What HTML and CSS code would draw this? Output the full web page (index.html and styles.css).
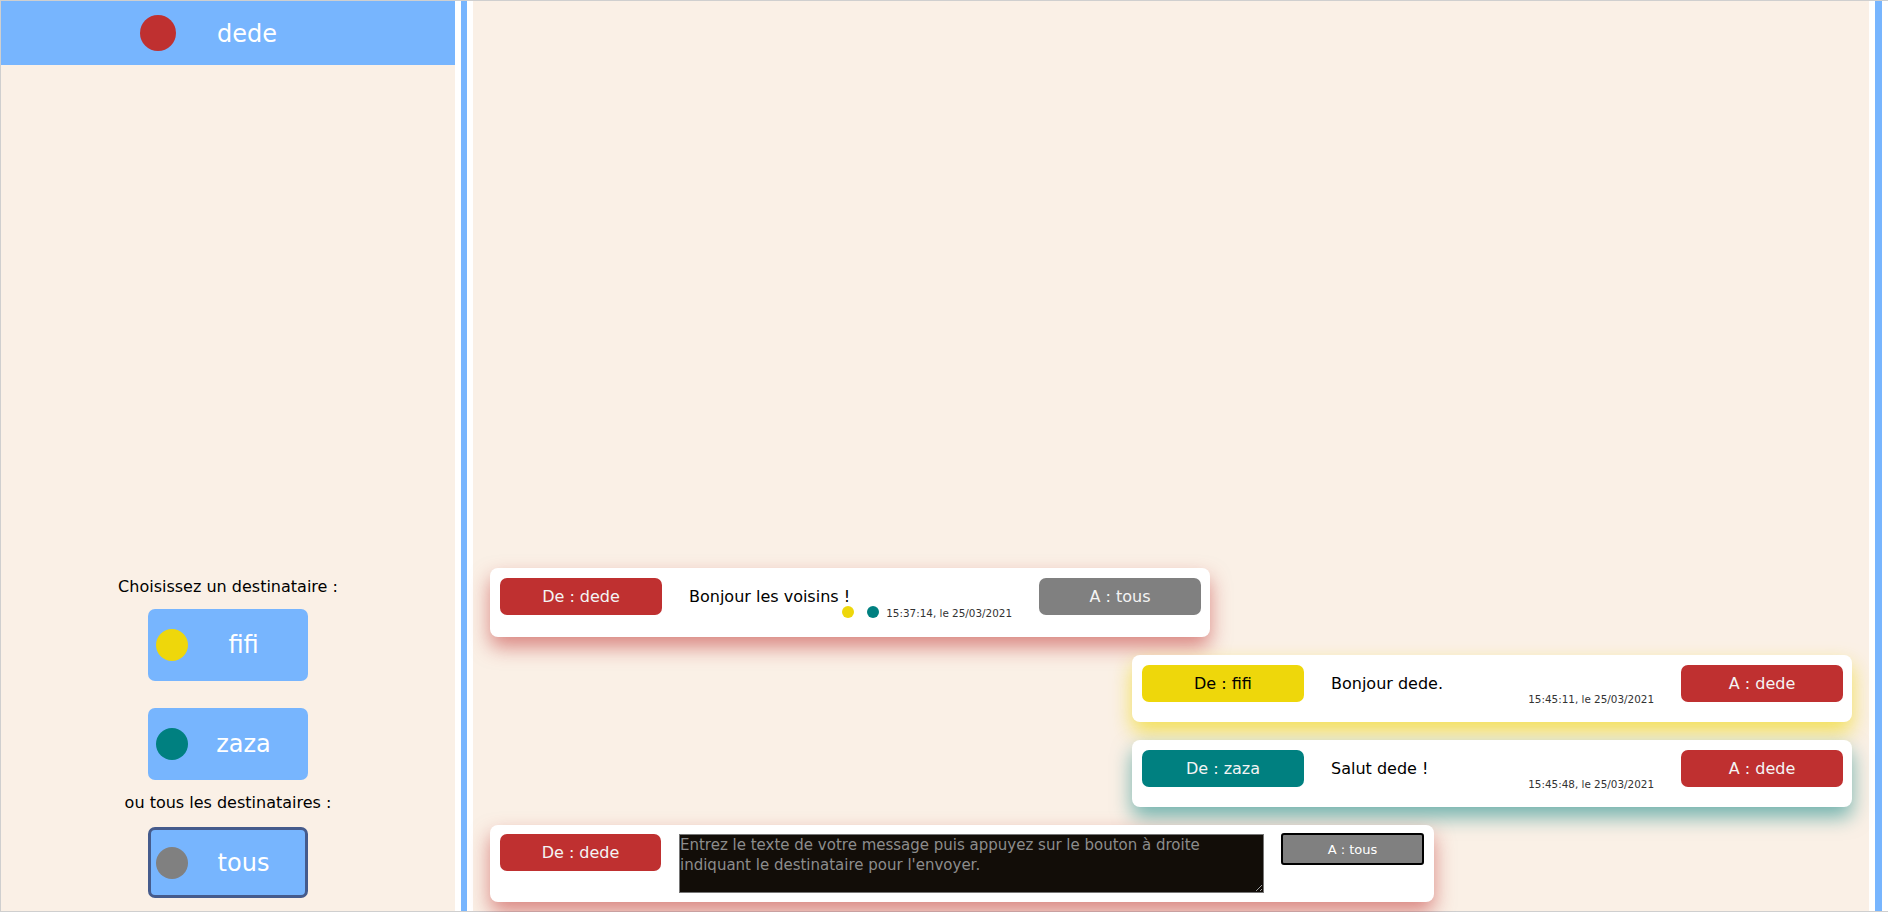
FILE: index.html
```html
<!DOCTYPE html>
<html lang="fr">
<head>
<meta charset="utf-8">
<title>Messagerie</title>
<link rel="stylesheet" href="styles.css">
</head>
<body>
<div class="app">
  <aside class="sidebar">
    <div class="me">
      <span class="avatar red"></span>
      <span class="me-name">dede</span>
    </div>
    <div class="choose">
      <p class="label">Choisissez un destinataire :</p>
      <button class="dest" type="button"><span class="dot-lg yellow"></span><span class="dest-name">fifi</span></button>
      <button class="dest dest-gap" type="button"><span class="dot-lg teal"></span><span class="dest-name">zaza</span></button>
      <p class="label label-2">ou tous les destinataires :</p>
      <button class="dest active" type="button"><span class="dot-lg gray"></span><span class="dest-name">tous</span></button>
    </div>
  </aside>
  <div class="frame">
    <div class="chat-border">
      <section class="chat">
        <div class="messages">
          <div class="msg left shadow-red">
            <span class="tag red">De : dede</span>
            <div class="body">
              <div class="text">Bonjour les voisins !</div>
              <div class="meta meta-dots"><span class="seen yellow"></span><span class="seen teal"></span>15:37:14, le 25/03/2021</div>
            </div>
            <span class="tag gray">A : tous</span>
          </div>
          <div class="msg right shadow-yellow">
            <span class="tag yellow dark">De : fifi</span>
            <div class="body">
              <div class="text">Bonjour dede.</div>
              <div class="meta">15:45:11, le 25/03/2021</div>
            </div>
            <span class="tag red">A : dede</span>
          </div>
          <div class="msg right shadow-teal">
            <span class="tag teal">De : zaza</span>
            <div class="body">
              <div class="text">Salut dede !</div>
              <div class="meta">15:45:48, le 25/03/2021</div>
            </div>
            <span class="tag red">A : dede</span>
          </div>
        </div>
        <form class="composer shadow-red">
          <span class="tag red">De : dede</span>
          <textarea class="input" placeholder="Entrez le texte de votre message puis appuyez sur le bouton à droite indiquant le destinataire pour l'envoyer."></textarea>
          <button class="send" type="button">A : tous</button>
        </form>
      </section>
    </div>
  </div>
</div>
</body>
</html>
```

FILE: styles.css
```css
* { box-sizing: border-box; }

html, body {
  margin: 0;
  padding: 0;
  width: 1888px;
  height: 912px;
  overflow: hidden;
  background: #ffffff;
  font-family: "DejaVu Sans", Verdana, sans-serif;
}

.app {
  display: flex;
  height: 912px;
  border-top: 1px solid #cfcfcf;
  border-bottom: 1px solid #cfcfcf;
  border-left: 1px solid #cfcfcf;
}

/* ---------- sidebar ---------- */
.sidebar {
  width: 454px;
  flex: 0 0 454px;
  background: #faf0e6;
  display: flex;
  flex-direction: column;
}

.me {
  height: 64px;
  background: #77b5fe;
  display: flex;
  align-items: center;
  padding-left: 139px;
  gap: 41px;
}

.avatar {
  width: 36px;
  height: 36px;
  border-radius: 50%;
  display: inline-block;
}

.me-name {
  color: #ffffff;
  font-size: 24px;
  position: relative;
  top: 1px;
}

.choose {
  flex: 1;
  display: flex;
  flex-direction: column;
  justify-content: flex-end;
  align-items: center;
  padding-bottom: 13px;
}

.label {
  margin: 0 0 12px;
  font-size: 16px;
  line-height: 20px;
  color: #000000;
}

.label-2 {
  margin: 13px 0 14px;
}

.dest {
  width: 160px;
  height: 72px;
  border: none;
  border-radius: 7px;
  background: #77b5fe;
  display: flex;
  align-items: center;
  padding: 0 8px;
  font-family: inherit;
  cursor: pointer;
}

.dest-gap {
  margin-top: 27px;
}

.dest.active {
  height: 71px;
  border: 3px solid #455b8c;
  padding: 0 5px;
}

.dot-lg {
  width: 32px;
  height: 32px;
  border-radius: 50%;
  flex: 0 0 32px;
}

.dest-name {
  flex: 1;
  text-align: center;
  color: #ffffff;
  font-size: 24px;
  margin-right: 1px;
}

/* ---------- chat frame ---------- */
.frame {
  flex: 1;
  background: #ffffff;
  padding: 0 6px;
  display: flex;
}

.chat-border {
  flex: 1;
  border-left: 6px solid #77b5fe;
  border-right: 7px solid #77b5fe;
  padding: 0 6px;
  background: #ffffff;
  display: flex;
}

.chat {
  flex: 1;
  background: #faf0e6;
  display: flex;
  flex-direction: column;
  justify-content: flex-end;
  padding: 0 17px 9px 17px;
}

.messages {
  display: flex;
  flex-direction: column;
  gap: 18px;
  margin-bottom: 18px;
}

.msg {
  width: 720px;
  background: #ffffff;
  border-radius: 8px;
  display: flex;
  align-items: flex-start;
  padding: 10px 9px 17px 10px;
}

.msg.left { align-self: flex-start; }
.msg.right { align-self: flex-end; }

.shadow-red { box-shadow: 0 10px 20px rgba(191, 48, 48, 0.55); }
.shadow-yellow { box-shadow: 0 10px 20px rgba(238, 215, 11, 0.65); }
.shadow-teal { box-shadow: 0 10px 20px rgba(0, 128, 128, 0.55); }

.tag {
  width: 162px;
  flex: 0 0 162px;
  height: 37px;
  border-radius: 7px;
  display: flex;
  align-items: center;
  justify-content: center;
  font-size: 16px;
  color: #f4f4f4;
}

.tag.dark { color: #000000; }

.body {
  flex: 1;
  margin: 0 27px;
  padding-top: 10px;
}

.text {
  font-size: 16px;
  line-height: 18px;
  color: #000000;
}

.meta {
  text-align: right;
  font-size: 10.4px;
  line-height: 12px;
  color: #333333;
}

.meta-dots {
  line-height: 14px;
}

.seen {
  display: inline-block;
  width: 12px;
  height: 12px;
  border-radius: 50%;
  vertical-align: -1px;
  margin-right: 7px;
}

.seen + .seen { margin-left: 6px; }

/* ---------- composer ---------- */
.composer {
  width: 944px;
  align-self: flex-start;
  background: #ffffff;
  border-radius: 8px;
  display: flex;
  align-items: flex-start;
  padding: 9px 10px 9px 10px;
  margin: 0;
}

.composer .tag {
  width: 161px;
  flex-basis: 161px;
}

.input {
  width: 585px;
  height: 59px;
  margin: 0 17px 0 18px;
  background: #120d08;
  border: 1px solid #767676;
  color: #cccccc;
  font-family: "DejaVu Sans", Verdana, sans-serif;
  font-size: 15px;
  line-height: 20px;
  padding: 0;
  resize: both;
}

.input::placeholder {
  color: #8c8c8c;
}

.send {
  width: 143px;
  height: 32px;
  margin-top: -1px;
  background: #808080;
  border: 2px solid #000000;
  border-radius: 3px;
  color: #ffffff;
  font-family: inherit;
  font-size: 13px;
  padding: 0;
  cursor: pointer;
}

/* ---------- colours ---------- */
.red { background: #bf3030; }
.yellow { background: #eed70b; }
.teal { background: #008080; }
.gray { background: #808080; }
```
